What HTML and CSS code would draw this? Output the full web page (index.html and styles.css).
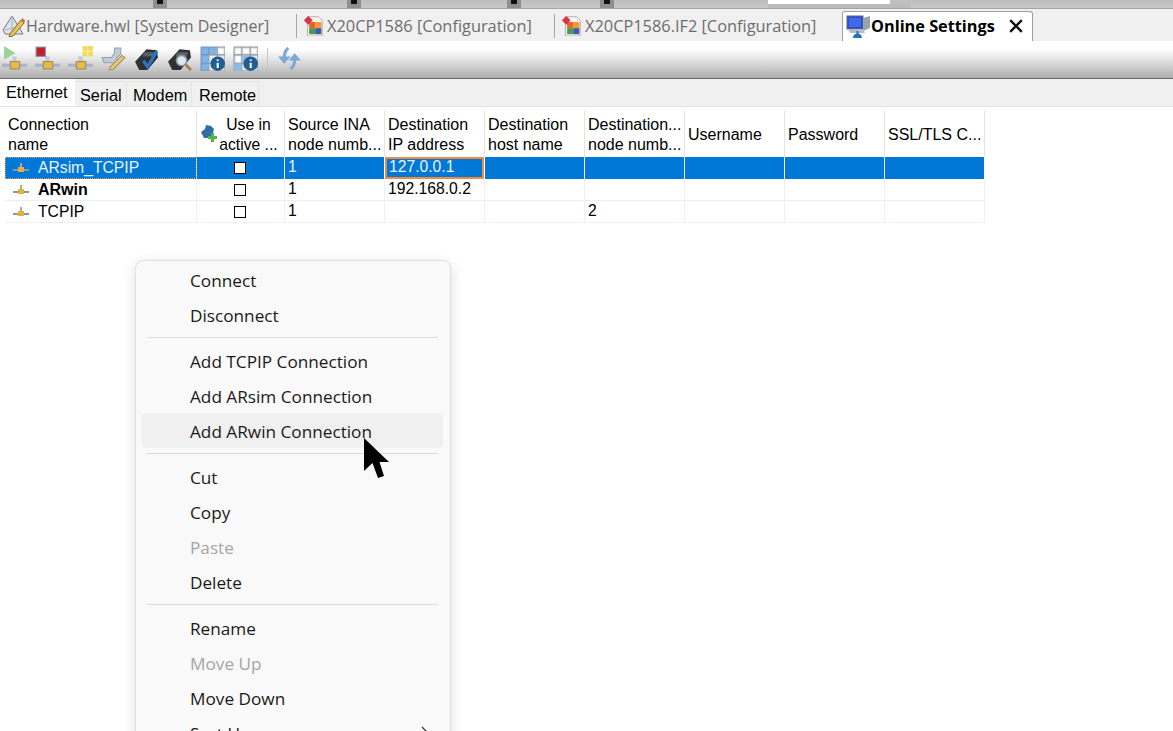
FILE: index.html
```html
<!DOCTYPE html>
<html lang="en">
<head>
<meta charset="utf-8">
<title>Online Settings</title>
<link rel="stylesheet" href="styles.css">
</head>
<body>
<div class="app">
  <div class="topstrip">
    <span class="seg s1"></span><i class="notch"></i>
    <span class="seg s2"></span><i class="notch"></i>
    <span class="seg s3"></span><i class="notch"></i>
    <span class="seg s4"></span><i class="notch"></i>
    <span class="seg s5"></span>
    <span class="field"></span>
    <span class="seg s6"></span>
  </div>
  <div class="doctabs">
    <div class="doctab t1">
      <svg class="dicon" viewBox="0 0 24 24"><path d="M1 17 10 3l11 18H3z" fill="#dfe3e8" stroke="#77797c"/><path d="M10 3v15M3 17c5-1 12-4 16-1" fill="none" stroke="#9cb3cc"/><path d="M8 21 19 7l3 3L11 23l-4 1z" fill="#eec64c" stroke="#7c6a3a"/><path d="m19 7 1.500-2 3 3-1.500 2z" fill="#df6f4e"/></svg>
      <span>Hardware.hwl [System Designer]</span>
    </div>
    <div class="doctab t2">
      <svg class="dicon cfgicon" viewBox="0 0 24 24"><use href="#cfg"/></svg>
      <span>X20CP1586 [Configuration]</span>
    </div>
    <div class="doctab t3">
      <svg class="dicon cfgicon" viewBox="0 0 24 24"><use href="#cfg"/></svg>
      <span>X20CP1586.IF2 [Configuration]</span>
    </div>
    <div class="doctab active">
      <svg class="dicon" viewBox="0 0 24 24"><rect x="1" y="1" width="16" height="13" fill="#2c4fd0" stroke="#5a6a80"/><path d="M3 3h12v9H3z" fill="#3f6bea"/><path d="M17 3l7-2v12l-7 3z" fill="#9aa2aa"/><path d="M2 14h15l2 4H4z" fill="#b7bcc1"/><path d="M7 23a4.500 4.500 0 0 1 9 0z" fill="#1c73b8"/><path d="M11.500 16v4" stroke="#1c73b8" stroke-width="2"/></svg>
      <span class="label">Online Settings</span>
      <svg class="close" viewBox="0 0 12 12"><path d="M1 1l10 10M11 1 1 11" stroke="#111" stroke-width="2" fill="none"/></svg>
    </div>
  </div>
  <div class="toolbar">
    <svg class="tool" viewBox="0 0 24 24"><use href="#net"/><path d="M2 0 13 7 2 13z" fill="#9ad29a"/></svg>
    <svg class="tool" viewBox="0 0 24 24"><use href="#net"/><rect x="1" y="1" width="9" height="9" fill="#c4202c" stroke="#8a98a6"/></svg>
    <svg class="tool" viewBox="0 0 24 24"><use href="#net"/><rect x="14" y="0" width="10" height="10" fill="#f4d95e"/><path d="M19 0v10M14 5h10" stroke="#fff3a8"/></svg>
    <svg class="tool" viewBox="0 0 24 24"><path d="M1 11h9l3-4V2h6v6l-4 3v5H3z" fill="#c3ccd6" stroke="#8fa1b3"/><path d="M9 20 20 9l3 2-11 11-4 1z" fill="#eacb7a" stroke="#a8915a"/></svg>
    <svg class="tool" viewBox="0 0 24 24"><use href="#dev"/><path d="M9 14l4 6 9-15" fill="none" stroke="#2a74c8" stroke-width="3"/></svg>
    <svg class="tool" viewBox="0 0 24 24"><use href="#dev"/><circle cx="14" cy="14" r="5" fill="#dbe6ee" stroke="#8a8f94" stroke-width="1.500"/><path d="m18 18 5 5" stroke="#a77b3f" stroke-width="2.500"/></svg>
    <svg class="tool" viewBox="0 0 24 24"><use href="#grid"/><path d="M1 1h7v23H1zM8 1h8v7H8z" fill="#5d9bdc" opacity=".75"/><use href="#info"/></svg>
    <svg class="tool" viewBox="0 0 24 24"><use href="#grid"/><path d="M9 9h7v7H9zM1 17h7v7H1z" fill="#8ebbe8"/><use href="#info"/></svg>
    <i class="tsep"></i>
    <svg class="tool sync" viewBox="0 0 24 24"><path d="M11 2C8 4 7 7 7 11M13 22c3-2 4-5 4-9" fill="none" stroke="#7fa8d4" stroke-width="3"/><path d="M1 10h12l-6 7zM23 14H11l6-7z" fill="#7fa8d4"/></svg>
  </div>
  <div class="subtabs">
    <div class="subtab on">Ethernet</div>
    <div class="subtab w1">Serial</div>
    <div class="subtab w2">Modem</div>
    <div class="subtab w3">Remote</div>
  </div>
  <div class="grid">
    <div class="hd">Connection<br>name</div>
    <div class="hd center"><svg class="plug" viewBox="0 0 18 18"><path d="M1 8l4-3 1-4 5 1 3 3-1 4-3 5H4z" fill="#2f6ea8"/><path d="M11 9h3v3h3v3h-3v3h-3v-3H8v-3h3z" fill="#4fb54a"/></svg><span class="usein">Use in<br>active ...</span></div>
    <div class="hd">Source INA<br>node numb...</div>
    <div class="hd">Destination<br>IP address</div>
    <div class="hd">Destination<br>host name</div>
    <div class="hd">Destination...<br>node numb...</div>
    <div class="hd mid">Username</div>
    <div class="hd mid">Password</div>
    <div class="hd mid">SSL/TLS C...</div>

    <div class="cell sel name"><svg class="rowicon" viewBox="0 0 16 12"><use href="#net2"/></svg>ARsim_TCPIP</div>
    <div class="cell sel center"><i class="check filled"></i></div>
    <div class="cell sel">1</div>
    <div class="cell sel focus">127.0.0.1</div>
    <div class="cell sel"></div><div class="cell sel"></div><div class="cell sel"></div><div class="cell sel"></div><div class="cell sel"></div>

    <div class="cell name bold"><svg class="rowicon" viewBox="0 0 16 12"><use href="#net2"/></svg>ARwin</div>
    <div class="cell center"><i class="check"></i></div>
    <div class="cell">1</div>
    <div class="cell">192.168.0.2</div>
    <div class="cell"></div><div class="cell"></div><div class="cell"></div><div class="cell"></div><div class="cell"></div>

    <div class="cell name"><svg class="rowicon" viewBox="0 0 16 12"><use href="#net2"/></svg>TCPIP</div>
    <div class="cell center"><i class="check"></i></div>
    <div class="cell">1</div>
    <div class="cell"></div>
    <div class="cell"></div>
    <div class="cell">2</div>
    <div class="cell"></div><div class="cell"></div><div class="cell"></div>
  </div>
</div>

<div class="menu">
  <div class="item">Connect</div>
  <div class="item">Disconnect</div>
  <hr class="sep">
  <div class="item">Add TCPIP Connection</div>
  <div class="item">Add ARsim Connection</div>
  <div class="item hover">Add ARwin Connection</div>
  <hr class="sep">
  <div class="item">Cut</div>
  <div class="item">Copy</div>
  <div class="item off">Paste</div>
  <div class="item">Delete</div>
  <hr class="sep">
  <div class="item">Rename</div>
  <div class="item off">Move Up</div>
  <div class="item">Move Down</div>
  <div class="item sub">Sort Up<svg class="chev" viewBox="0 0 8 14"><path d="M1 1l6 6-6 6" fill="none" stroke="#333" stroke-width="1.200"/></svg></div>
</div>

<svg class="cursor" viewBox="0 0 26 42"><path d="M1 0 26 24H16.500L21 38 15 40 9.500 25 1 33z" fill="#000"/></svg>

<svg class="defs" width="0" height="0">
  <defs>
    <g id="cfg">
      <path d="M5 2h13l4 4v18H5z" fill="#f6f4ee" stroke="#a9a9a5"/>
      <path d="M7 8h7v7H7z" fill="#e8632b"/><path d="M14 8h7v7h-7z" fill="#f29a2e"/><path d="M7 15h7v7H7z" fill="#4d9a4e"/><path d="M14 15h7v7h-7z" fill="#3f5aa6"/>
      <path d="M6 1l5 5-5 5-5-5z" fill="#d8334a"/>
    </g>
    <g id="net">
      <path d="M0 17h24v3H0z" fill="#a7b4c4"/><path d="M12 10v6" stroke="#c3cad2" stroke-width="4"/>
      <rect x="8" y="15" width="9" height="7" fill="#e6bb4a" stroke="#a08a4e"/>
    </g>
    <g id="net2">
      <path d="M0 7h16v2H0z" fill="#8b96a3"/><path d="M8 1v6" stroke="#a8a8a8" stroke-width="2"/>
      <rect x="5" y="5" width="6" height="5" fill="#e4b23a"/>
    </g>
    <g id="dev">
      <path d="M1 15 12 3l10 1 1 7-10 12H5z" fill="#2e3237"/><path d="M10 6h10l-1 4H8z" fill="#5a6068"/>
    </g>
    <g id="grid">
      <rect x="1" y="1" width="23" height="23" fill="#e4e7ea" stroke="#8e9499"/>
      <path d="M8.500 1v23M16.500 1v23M1 8.500h23M1 16.500h23" stroke="#8e9499"/>
      <path d="M3 3h4v4H3zM10 3h5v4h-5zM18 3h4v4h-4zM3 10h4v5H3zM10 10h5v5h-5zM3 18h4v4H3z" fill="#fff"/>
    </g>
    <g id="info">
      <circle cx="17" cy="17" r="7" fill="#1f5f96"/><path d="M17 13v1.500M17 16v5" stroke="#fff" stroke-width="2"/>
    </g>
  </defs>
</svg>
</body>
</html>
```
FILE: styles.css
```css
* { box-sizing: border-box; }
html, body { margin: 0; height: 100%; overflow: hidden; background: #fff; }
.app { display: flex; flex-direction: column; height: 731px; }
.defs { position: absolute; }

.topstrip { height: 9px; display: flex; background: #bcbcbc; border-bottom: 1px solid #a6a6a6; }
.seg { display: block; background: linear-gradient(#bdbdbd, #c8c8c8); }
.s1 { width: 153px; }
.s2 { width: 180px; }
.s3 { width: 146px; }
.s4 { width: 79px; }
.s5 { width: 154px; }
.s6 { flex: 1; }
.notch { width: 14px; height: 8px; background: #8f8f8f; position: relative; }
.notch::after { content: ""; position: absolute; left: 4px; top: 0; width: 6px; height: 4px; background: #111; }
.field { width: 143px; height: 4px; background: linear-gradient(90deg, #fff 85%, #c0c0c0 85%); }

.doctabs { height: 32px; display: flex; background: #f0f0f0; align-items: stretch; position: relative; font: 16px "Open Sans", sans-serif; color: #6d6d6d; }
.doctab { display: flex; align-items: center; white-space: nowrap; }
.dicon { width: 24px; height: 24px; flex: none; }
.cfgicon { width: 21px; height: 21px; }
.t1 { width: 296px; padding-left: 2px; }
.t1 span { margin-top: 1px; }
.t2 { width: 258px; padding-left: 7px; }
.t3 { width: 288px; padding-left: 7px; }
.t2, .t3 { position: relative; }
.t2 span, .t3 span { margin: 1px 0 0 3px; font-size: 16.350px; }
.t2::before, .t3::before { content: ""; position: absolute; left: 0; top: 5px; height: 24px; width: 1px; background: #a8a8a8; }
.active { width: 191px; margin-top: 2px; padding-left: 3px; background: #fff; border: 1px solid #a0a0a0; border-bottom: 0; border-radius: 3px 3px 0 0; color: #000; }
.label { font-weight: 700; font-size: 16.300px; margin: -2px 14px 0 1px; }
.close { width: 14px; height: 14px; margin-top: -1px; }

.toolbar { height: 38px; display: flex; align-items: center; padding: 0 0 2px 2px; gap: 8px; background: linear-gradient(#fff 0, #fff 22%, #e6e6e6 48%, #adadad 100%); border-bottom: 1px solid #6b6b6b; }
.tool { width: 25px; height: 25px; flex: none; }
.tsep { width: 1px; height: 22px; background: #c6c6c6; margin-left: 1px; }
.sync { margin-left: 1px; }

.subtabs { height: 28px; display: flex; align-items: flex-end; background: #f0f0f0; border-bottom: 1px solid #e3e3e3; font: 16.300px "Liberation Sans", sans-serif; color: #000; }
.subtab { height: 25px; padding: 3px 0 0 5px; border: 1px solid #e4e4e4; border-bottom: 0; border-left: 0; background: #f0f0f0; line-height: 20px; }
.w1 { width: 52px; }
.w2 { width: 65px; padding-left: 6px; }
.w3 { width: 67px; padding-left: 7px; }
.subtab.on { width: 75px; height: 27px; background: #fff; padding: 3px 0 0 6px; border: 0; }

.grid { display: grid; grid-template-columns: 192px 88px repeat(7, 100px); grid-template-rows: 47px 22px 22px 22px; margin: 3px 0 0 5px; width: 980px; font: 16px "Liberation Sans", sans-serif; color: #000; }
.hd { padding: 5px 0 0 3px; line-height: 20px; border-right: 1px solid #e4e4e4; white-space: nowrap; overflow: hidden; }
.hd.mid { padding-top: 15px; }
.hd.center { text-align: center; display: flex; justify-content: center; padding: 5px 0 0 0; position: relative; }
.plug { position: absolute; left: 3px; top: 14px; width: 18px; height: 18px; }
.usein { margin-left: 16px; font-size: 15.700px; }
.cell { border-right: 1px solid #eaf0f6; border-bottom: 1px solid #ebeff3; padding: 0 0 0 3px; font-size: 15.700px; line-height: 20px; white-space: nowrap; overflow: hidden; }
.cell.center { display: flex; align-items: center; justify-content: center; padding: 0 2px 0 0; }
.name { padding-left: 8px; display: flex; align-items: center; gap: 9px; }
.bold { font-weight: 700; font-size: 16px; }
.rowicon { width: 16px; height: 12px; flex: none; }
.sel { background: #0078d7; color: #e8f2fb; border-right-color: #fff; border-bottom: 0; }
.focus { box-shadow: inset 0 0 0 2px #f08a3c; color: #e8f2fb; padding-left: 4px; }
.name.sel { outline: 1px dotted #e89a50; outline-offset: -1px; }
.check { display: block; width: 12px; height: 12px; border: 1px solid #000; background: #fff; }

.menu { position: absolute; left: 135px; top: 260px; width: 316px; height: 480px; padding: 1px 7px 0 6px; background: #f9f9f9; border: 1px solid #e0e0e0; border-radius: 8px; box-shadow: 0 4px 14px rgba(0,0,0,.13); font: 17.200px "Open Sans", sans-serif; color: #1a1a1a; }
.item { height: 35px; line-height: 37px; padding-left: 48px; border-radius: 4px; white-space: nowrap; position: relative; }
.item.hover { background: #f0f0f0; }
.item.off { color: #a5a5a5; }
.sep { height: 1px; border: 0; margin: 5px 5px; background: #dcdcdc; }
.chev { position: absolute; right: 14px; top: 11px; width: 8px; height: 14px; }
.cursor { position: absolute; left: 363px; top: 438px; width: 26px; height: 42px; }
```
